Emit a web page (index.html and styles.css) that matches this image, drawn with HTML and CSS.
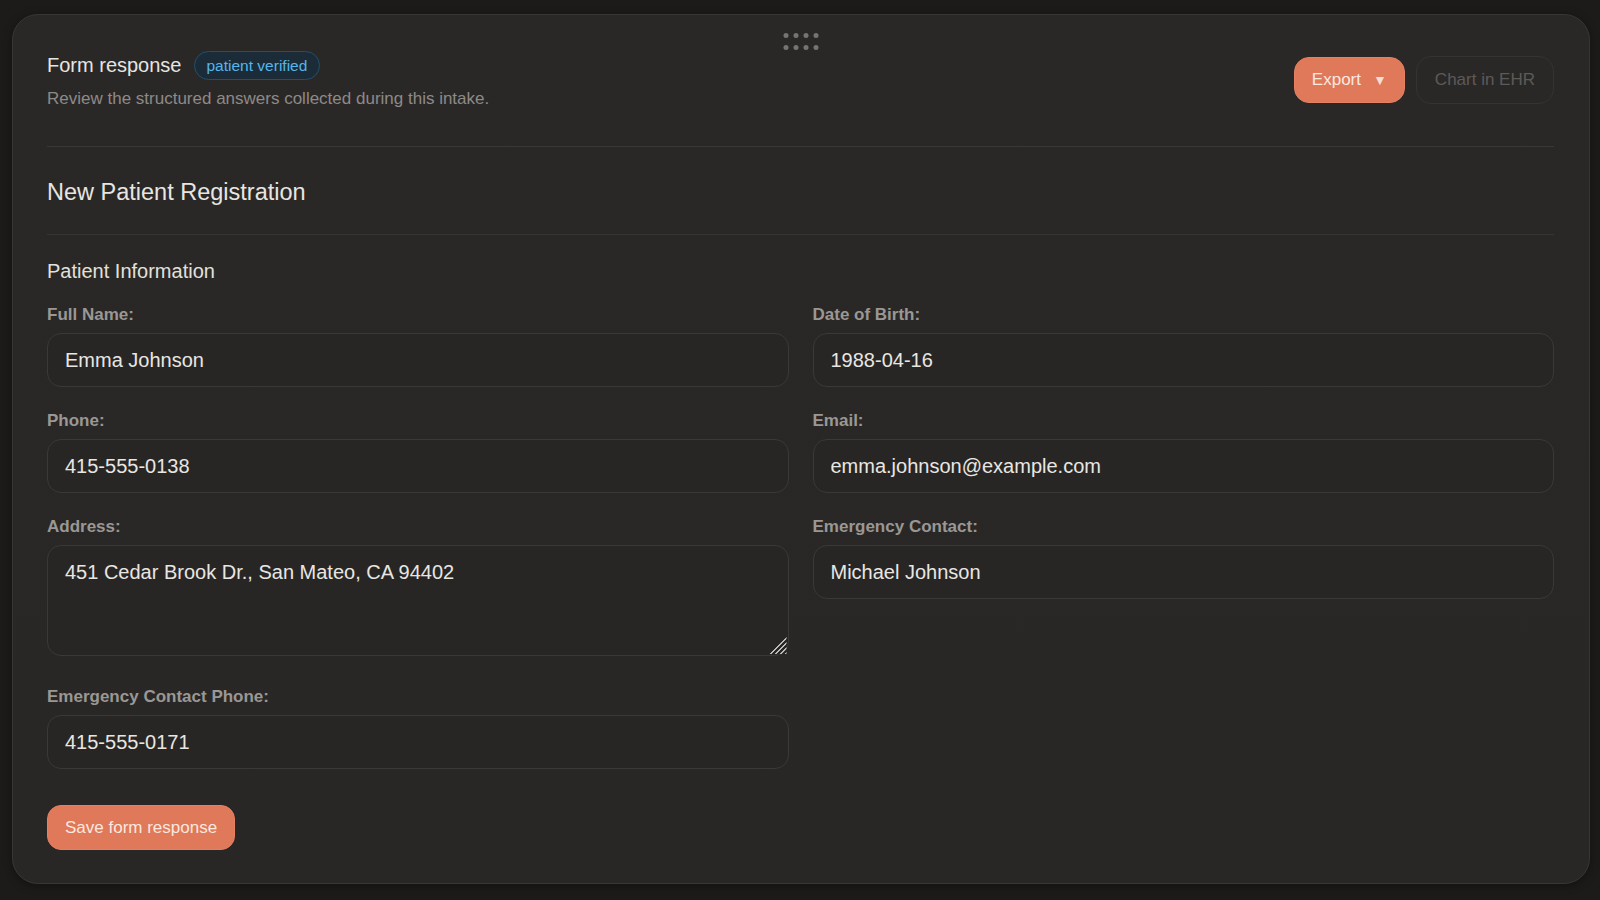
FILE: index.html
```html
<!DOCTYPE html>
<html lang="en">
<head>
<meta charset="utf-8">
<title>Form response</title>
<link rel="stylesheet" href="styles.css">
</head>
<body>
<div class="card">
  <div class="handle" aria-hidden="true">
    <span></span><span></span><span></span><span></span>
    <span></span><span></span><span></span><span></span>
  </div>
  <header class="head">
    <div class="head-text">
      <div class="title-row">
        <h1 class="title">Form response</h1>
        <span class="badge">patient verified</span>
      </div>
      <p class="subtitle">Review the structured answers collected during this intake.</p>
    </div>
    <div class="actions">
      <button class="btn btn-primary">Export <span class="caret">▼</span></button>
      <button class="btn btn-ghost">Chart in EHR</button>
    </div>
  </header>
  <section class="form-title">
    <h2>New Patient Registration</h2>
  </section>
  <section class="form-body">
    <h3 class="group-title">Patient Information</h3>
    <div class="grid">
      <div class="field">
        <label>Full Name:</label>
        <input class="input" type="text" value="Emma Johnson">
      </div>
      <div class="field">
        <label>Date of Birth:</label>
        <input class="input" type="text" value="1988-04-16">
      </div>
      <div class="field">
        <label>Phone:</label>
        <input class="input" type="text" value="415-555-0138">
      </div>
      <div class="field">
        <label>Email:</label>
        <input class="input" type="text" value="emma.johnson@example.com">
      </div>
      <div class="field">
        <label>Address:</label>
        <div class="textarea-wrap">
          <textarea class="input textarea">451 Cedar Brook Dr., San Mateo, CA 94402</textarea>
        </div>
      </div>
      <div class="field">
        <label>Emergency Contact:</label>
        <input class="input" type="text" value="Michael Johnson">
      </div>
      <div class="field">
        <label>Emergency Contact Phone:</label>
        <input class="input" type="text" value="415-555-0171">
      </div>
    </div>
    <button class="btn btn-primary btn-save">Save form response</button>
  </section>
</div>
</body>
</html>
```

FILE: styles.css
```css
* { box-sizing: border-box; }

html, body {
  margin: 0;
  height: 100%;
}

body {
  background: #1c1b1a;
  font-family: "Liberation Sans", Arial, sans-serif;
  color: #e7e4e0;
  padding: 14px 10px 16px 12px;
}

.card {
  position: relative;
  background: linear-gradient(180deg, #2a2827 0%, #292726 100%);
  border: 1px solid #383634;
  border-radius: 26px;
  padding: 36px 35px 34px 34px;
  box-shadow: 0 2px 10px rgba(0, 0, 0, 0.35);
  height: 870px;
}

.handle {
  position: absolute;
  top: 18px;
  left: 50%;
  transform: translateX(-50%);
  display: grid;
  grid-template-columns: repeat(4, 5px);
  gap: 7px 5px;
}
.handle span {
  width: 5px;
  height: 5px;
  border-radius: 50%;
  background: #77736f;
}

.head {
  display: flex;
  align-items: center;
  justify-content: space-between;
  padding-bottom: 38px;
  border-bottom: 1px solid #3a3836;
}

.title-row {
  display: flex;
  align-items: center;
  gap: 12px;
}

.title {
  margin: 0;
  font-size: 20px;
  font-weight: 400;
  color: #e8e5e1;
  line-height: 29px;
}

.badge {
  display: inline-flex;
  align-items: center;
  height: 29px;
  padding: 0 12px;
  border-radius: 999px;
  background: #1b2c38;
  border: 1px solid #21506e;
  color: #56b5ea;
  font-size: 15.5px;
}

.subtitle {
  margin: 9px 0 0;
  font-size: 17px;
  line-height: 19px;
  color: #8d8a87;
}

.actions {
  display: flex;
  align-items: center;
  gap: 11px;
}

.btn {
  font-family: "Liberation Sans", Arial, sans-serif;
  font-size: 17px;
  border-radius: 15px;
  height: 46px;
  cursor: pointer;
}

.btn-primary {
  background: #e0785a;
  color: #fbe8df;
  border: 1px solid #e58063;
  padding: 0 17px;
  display: inline-flex;
  align-items: center;
}

.caret {
  font-size: 14px;
  margin-left: 12px;
  color: #f4ddd3;
}

.btn-ghost {
  background: #2a2827;
  color: #5d5a57;
  border: 1px solid #353331;
  padding: 0 18px;
  height: 48px;
}

.form-title {
  padding: 31px 0 28px;
  border-bottom: 1px solid #363432;
}
.form-title h2 {
  margin: 0;
  font-size: 23.5px;
  font-weight: 400;
  line-height: 28px;
  color: #e8e5e1;
}

.form-body {
  padding-top: 24px;
}

.group-title {
  margin: 0 0 22px;
  font-size: 20px;
  font-weight: 400;
  line-height: 24px;
  color: #e3e0dc;
}

.grid {
  display: grid;
  grid-template-columns: 1fr 1fr;
  gap: 24px 24px;
}

.field {
  display: flex;
  flex-direction: column;
  gap: 8px;
}

.field label {
  font-size: 17px;
  font-weight: 700;
  line-height: 20px;
  color: #9a9794;
}

.input {
  display: block;
  width: 100%;
  height: 54px;
  background: #282625;
  border: 1px solid #3b3937;
  border-radius: 14px;
  padding: 0 17px;
  font-family: "Liberation Sans", Arial, sans-serif;
  font-size: 20px;
  color: #e9e6e2;
  outline: none;
}

.textarea-wrap {
  position: relative;
  margin-bottom: 7px;
}

.textarea-wrap::after {
  content: "";
  position: absolute;
  right: 2px;
  bottom: 2px;
  width: 18px;
  height: 18px;
  background: repeating-linear-gradient(135deg,
    transparent 0px, transparent 2.4px,
    #bdb9b5 2.4px, #bdb9b5 3.6px);
  clip-path: polygon(100% 0, 100% 100%, 0 100%);
  pointer-events: none;
}

.textarea {
  height: 111px;
  padding: 15px 17px;
  line-height: 23px;
  resize: none;
}

.btn-save {
  margin-top: 36px;
  height: 45px;
  padding: 0 17px;
  border-radius: 14px;
}
```
